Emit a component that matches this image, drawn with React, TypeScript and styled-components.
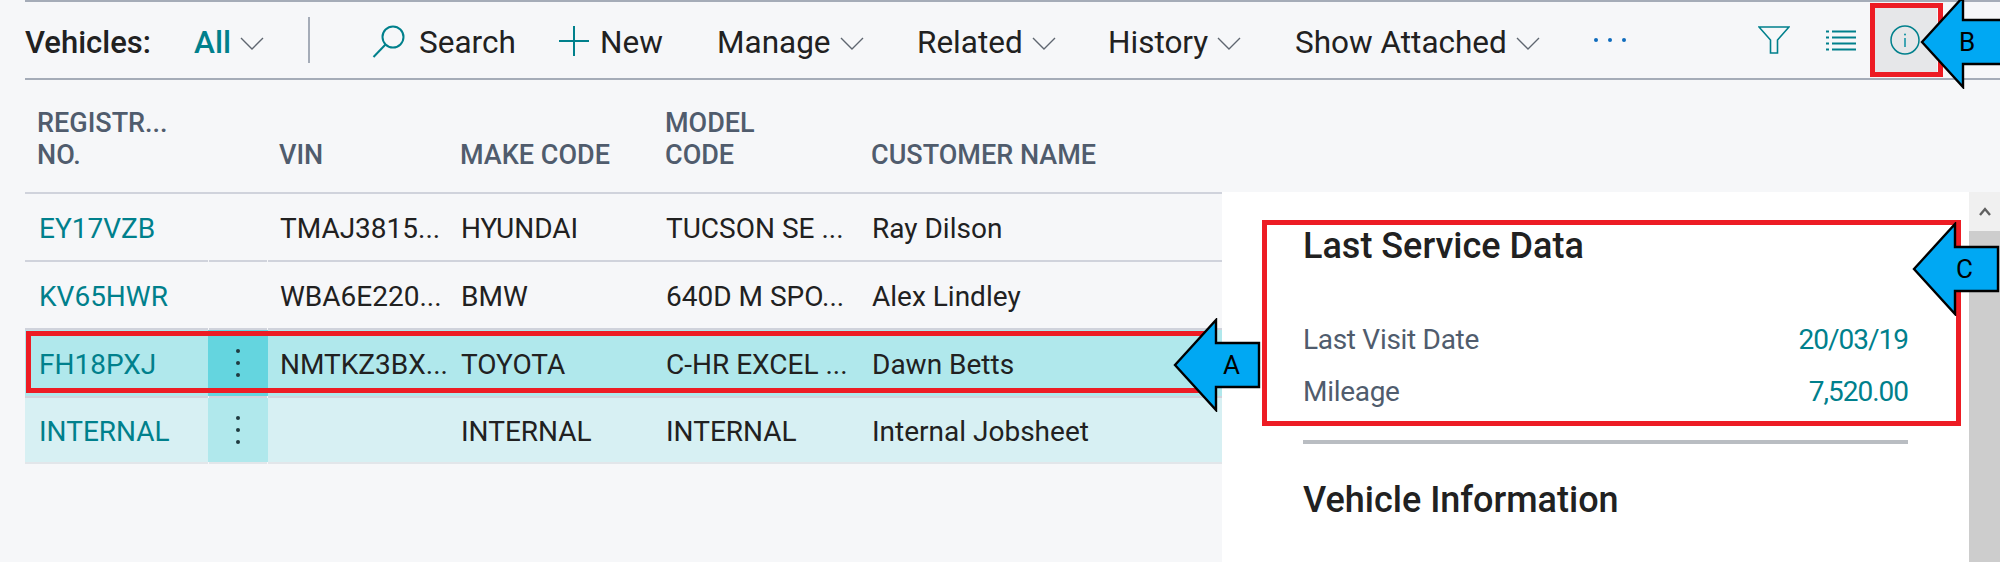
import * as React from 'react';
import styled, { createGlobalStyle } from 'styled-components';

const TEAL = '#00808c';
const SANS = 'Roboto, "Open Sans", sans-serif';

const GlobalStyle = createGlobalStyle`
  html, body {
    margin: 0;
    padding: 0;
    background: #f6f7f9;
  }
`;

const columns = '183px 60px 181px 205px 206px 1fr';

type VehicleRow = {
  reg: string;
  vin: string;
  make: string;
  model: string;
  customer: string;
  tone: 'plain' | 'current' | 'selected';
};

const rows: VehicleRow[] = [
  { reg: 'EY17VZB', vin: 'TMAJ3815...', make: 'HYUNDAI', model: 'TUCSON SE ...', customer: 'Ray Dilson', tone: 'plain' },
  { reg: 'KV65HWR', vin: 'WBA6E220...', make: 'BMW', model: '640D M SPO...', customer: 'Alex Lindley', tone: 'plain' },
  { reg: 'FH18PXJ', vin: 'NMTKZ3BX...', make: 'TOYOTA', model: 'C-HR EXCEL ...', customer: 'Dawn Betts', tone: 'current' },
  { reg: 'INTERNAL', vin: '', make: 'INTERNAL', model: 'INTERNAL', customer: 'Internal Jobsheet', tone: 'selected' },
];

const rowBg = { plain: 'transparent', current: '#b0e8ec', selected: '#d7f0f3' };
const menuBg = { plain: 'transparent', current: '#64d5df', selected: '#b0e8ec' };

function Chevron() {
  return (
    <ChevronIcon viewBox="0 0 24 13">
      <path d="M1 1l11 11L23 1" fill="none" stroke="#5f6670" strokeWidth="1.4" />
    </ChevronIcon>
  );
}

function Callout(props: { letter: string; x: number; y: number; shaft: number; letterX: number }) {
  const { letter, x, y, shaft, letterX } = props;
  const w = 41 + shaft;
  return (
    <CalloutBox $x={x} $y={y} $w={w}>
      <svg width={w + 4} height="94" viewBox={`0 0 ${w + 4} 94`}>
        <polygon
          points={`2,47 43,2 43,25 ${w + 2},25 ${w + 2},69 43,69 43,92`}
          fill="#00a8f3"
          stroke="#000"
          strokeWidth="2.4"
        />
      </svg>
      <CalloutLetter $x={letterX}>{letter}</CalloutLetter>
    </CalloutBox>
  );
}

function App() {
  return (
    <Page>
      <GlobalStyle />
      <Toolbar>
        <Title>Vehicles:</Title>
        <ViewPicker>
          All
          <Chevron />
        </ViewPicker>
        <Separator />
        <ToolButton $w={187}>
          <ToolIcon width="34" height="33" viewBox="0 0 34 33">
            <circle cx="21" cy="12" r="10.5" fill="none" stroke={TEAL} strokeWidth="2" />
            <path d="M13.5 19.5L1.5 32" fill="none" stroke={TEAL} strokeWidth="2" />
          </ToolIcon>
          <IconLabel>Search</IconLabel>
        </ToolButton>
        <ToolButton $w={158}>
          <ToolIcon width="30" height="30" viewBox="0 0 30 30">
            <path d="M15 0v30M0 15h30" stroke={TEAL} strokeWidth="2" />
          </ToolIcon>
          <PlusLabel>New</PlusLabel>
        </ToolButton>
        <ToolButton $w={200}>
          Manage
          <Chevron />
        </ToolButton>
        <ToolButton $w={191}>
          Related
          <Chevron />
        </ToolButton>
        <ToolButton $w={187}>
          History
          <Chevron />
        </ToolButton>
        <ToolButton $w={299}>
          Show Attached
          <Chevron />
        </ToolButton>
        <MoreDots>
          <i />
          <i />
          <i />
        </MoreDots>
        <RightIcons>
          <svg width="32" height="28" viewBox="0 0 32 28">
            <path d="M1 1h30L19.5 14v13h-7V14z" fill="none" stroke={TEAL} strokeWidth="1.6" />
          </svg>
          <svg width="30" height="21" viewBox="0 0 30 21">
            <path
              d="M0 1.5h3M6 1.5h24M0 7.5h3M6 7.5h24M0 13.5h3M6 13.5h24M0 19.5h3M6 19.5h24"
              stroke={TEAL}
              strokeWidth="2"
            />
          </svg>
          <InfoTab>
            <svg width="30" height="30" viewBox="0 0 30 30">
              <circle cx="15" cy="15" r="14" fill="none" stroke={TEAL} strokeWidth="1.5" />
              <path d="M15 13v9" stroke="#0a8fa0" strokeWidth="1.5" />
              <circle cx="15" cy="9.5" r="1" fill="#0a8fa0" />
            </svg>
          </InfoTab>
        </RightIcons>
      </Toolbar>

      <HeadRow>
        <HeadCell>
          REGISTR...
          <br />
          NO.
        </HeadCell>
        <span />
        <HeadCell>VIN</HeadCell>
        <HeadCell>MAKE CODE</HeadCell>
        <HeadCell>
          MODEL
          <br />
          CODE
        </HeadCell>
        <HeadCell>CUSTOMER NAME</HeadCell>
      </HeadRow>

      <Body>
        <Table>
          {rows.map((r) => (
            <Row key={r.reg} $tone={r.tone}>
              <RegCell>{r.reg}</RegCell>
              <MenuCell $tone={r.tone}>
                {r.tone !== 'plain' && (
                  <MenuDots>
                    <i />
                    <i />
                    <i />
                  </MenuDots>
                )}
              </MenuCell>
              <Cell>{r.vin}</Cell>
              <Cell>{r.make}</Cell>
              <Cell>{r.model}</Cell>
              <Cell>{r.customer}</Cell>
            </Row>
          ))}
        </Table>

        <Panel>
          <PanelContent>
            <PanelHeading>Last Service Data</PanelHeading>
            <Fields>
              <Field>
                <FieldLabel>Last Visit Date</FieldLabel>
                <FieldValue>20/03/19</FieldValue>
              </Field>
              <Field>
                <FieldLabel>Mileage</FieldLabel>
                <FieldValue>7,520.00</FieldValue>
              </Field>
            </Fields>
            <Divider />
            <SecondHeading>Vehicle Information</SecondHeading>
          </PanelContent>
          <Scrollbar>
            <ScrollUp>
              <svg width="12" height="9" viewBox="0 0 12 9">
                <path d="M1 8l5-6 5 6" fill="none" stroke="#606060" strokeWidth="2.4" />
              </svg>
            </ScrollUp>
          </Scrollbar>
        </Panel>
      </Body>

      <RedBox $x={26} $y={331} $w={1186} $h={62} />
      <RedBox $x={1262} $y={220} $w={699} $h={206} />
      <RedBox $x={1870} $y={3} $w={73} $h={74} />
      <Callout letter="A" x={1173} y={318} shaft={43} letterX={50} />
      <Callout letter="C" x={1912} y={222} shaft={43} letterX={44} />
      <Callout letter="B" x={1920} y={-5} shaft={60} letterX={39} />
    </Page>
  );
}

const Page = styled.div`
  position: relative;
  width: 2000px;
  height: 562px;
  overflow: hidden;
  background: #f6f7f9;
  font-family: ${SANS};
  color: #212121;
`;

const Toolbar = styled.div`
  display: flex;
  align-items: center;
  height: 76px;
  margin-left: 25px;
  border-top: 2px solid #a5acb8;
  border-bottom: 2px solid #a5acb8;
  font-size: 31.5px;
`;

const Title = styled.div`
  width: 169px;
  padding-top: 4px;
  font-size: 31px;
  font-weight: 500;
`;

const ViewPicker = styled.div`
  display: flex;
  align-items: center;
  width: 114px;
  padding-top: 4px;
  color: ${TEAL};
  font-weight: 500;
`;

const ChevronIcon = styled.svg`
  flex: none;
  width: 24px;
  height: 13px;
  margin-left: 9px;
  margin-top: 2px;
`;

const Separator = styled.div`
  width: 2px;
  height: 46px;
  margin-right: 62px;
  background: #a5acb8;
`;

const ToolButton = styled.div<{ $w: number }>`
  display: flex;
  align-items: center;
  flex: none;
  width: ${(p) => p.$w}px;
  padding-top: 4px;
`;

const ToolIcon = styled.svg`
  flex: none;
  margin-top: -2px;
`;

const IconLabel = styled.span`
  margin-left: 13px;
`;

const PlusLabel = styled.span`
  margin-left: 11px;
`;

const MoreDots = styled.div`
  display: flex;
  gap: 10px;
  width: 164px;

  i {
    width: 4px;
    height: 4px;
    border-radius: 50%;
    background: #0f6cbd;
  }
`;

const RightIcons = styled.div`
  display: flex;
  align-items: center;
  gap: 36px;
`;

const InfoTab = styled.div`
  display: flex;
  align-items: center;
  justify-content: center;
  width: 64px;
  height: 66px;
  margin-left: -19px;
  background: #e6e7e9;
`;

const HeadRow = styled.div`
  display: grid;
  grid-template-columns: ${columns};
  align-items: end;
  width: 1197px;
  height: 112px;
  margin-left: 25px;
  padding-bottom: 21px;
  box-sizing: border-box;
`;

const HeadCell = styled.div`
  padding-left: 11px;
  font-family: Roboto, sans-serif;
  font-size: 27px;
  font-weight: 500;
  line-height: 32px;
  color: #505c6d;
  white-space: nowrap;

  &:first-child {
    padding-left: 12px;
  }
`;

const Body = styled.div`
  display: flex;
  height: 370px;
`;

const Table = styled.div`
  flex: none;
  width: 1197px;
  margin-left: 25px;
  border-top: 2px solid #d0d3dc;
  align-self: flex-start;
`;

const Row = styled.div<{ $tone: VehicleRow['tone'] }>`
  display: grid;
  grid-template-columns: ${columns};
  align-items: center;
  height: 66px;
  border-bottom: 2px solid ${(p) => (p.$tone === 'selected' ? '#e2e6ea' : '#d0d3dc')};
  background: ${(p) => rowBg[p.$tone]};
  font-size: 28px;

  &:last-child {
    height: 64px;
  }
`;

const Cell = styled.div`
  padding: 2px 0 0 12px;
  white-space: nowrap;
`;

const RegCell = styled(Cell)`
  padding-left: 14px;
  color: ${TEAL};
`;

const MenuCell = styled.div<{ $tone: VehicleRow['tone'] }>`
  position: relative;
  display: flex;
  align-items: center;
  justify-content: center;
  height: 100%;
  background: ${(p) => menuBg[p.$tone]};

  &::before,
  &::after {
    content: '';
    position: absolute;
    bottom: -2px;
    width: 1px;
    height: 2px;
    background: #f6f7f9;
  }
  &::before {
    left: 0;
  }
  &::after {
    right: 0;
  }
`;

const MenuDots = styled.div`
  display: flex;
  flex-direction: column;
  gap: 8px;

  i {
    width: 4px;
    height: 4px;
    border-radius: 50%;
    background: #1f3a40;
  }
`;

const Panel = styled.div`
  flex: 1;
  display: flex;
  background: #fff;
`;

const PanelContent = styled.div`
  flex: 1;
  padding: 31px 61px 0 81px;
`;

const PanelHeading = styled.div`
  font-size: 36px;
  line-height: 46px;
  font-weight: 500;
`;

const Fields = styled.div`
  display: flex;
  flex-direction: column;
  gap: 16px;
  margin-top: 53px;
  font-size: 28px;
`;

const Field = styled.div`
  display: flex;
  justify-content: space-between;
  line-height: 36px;
`;

const FieldLabel = styled.span`
  color: #505c6d;
  letter-spacing: -0.3px;
`;

const FieldValue = styled.span`
  color: ${TEAL};
  letter-spacing: -1px;
`;

const Divider = styled.div`
  height: 4px;
  margin-top: 30px;
  background: #b9bdc2;
`;

const SecondHeading = styled(PanelHeading)`
  margin-top: 33px;
`;

const Scrollbar = styled.div`
  flex: none;
  width: 31px;
  background: #cdcdcd;
`;

const ScrollUp = styled.div`
  display: flex;
  align-items: center;
  justify-content: center;
  height: 39px;
  background: #f0f0f0;
`;

const RedBox = styled.div<{ $x: number; $y: number; $w: number; $h: number }>`
  position: absolute;
  left: ${(p) => p.$x}px;
  top: ${(p) => p.$y}px;
  width: ${(p) => p.$w}px;
  height: ${(p) => p.$h}px;
  box-sizing: border-box;
  border: 5px solid #ed1c24;
`;

const CalloutBox = styled.div<{ $x: number; $y: number; $w: number }>`
  position: absolute;
  left: ${(p) => p.$x}px;
  top: ${(p) => p.$y}px;
  width: ${(p) => p.$w + 4}px;
  height: 94px;

  svg {
    display: block;
  }
`;

const CalloutLetter = styled.span<{ $x: number }>`
  position: absolute;
  left: ${(p) => p.$x}px;
  top: 27px;
  font-size: 26px;
  line-height: 40px;
  color: #000;
`;

export default App;
